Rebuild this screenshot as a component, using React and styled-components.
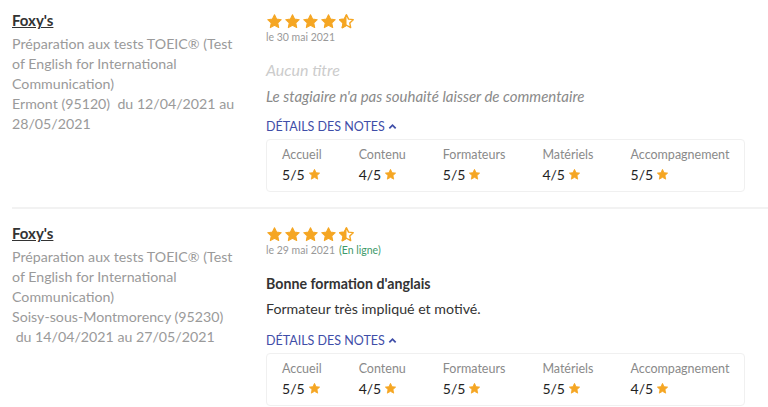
import React from "react";
import styled, { createGlobalStyle } from "styled-components";

const GlobalStyle = createGlobalStyle`
  body {
    margin: 0;
    background: #fff;
    font-family: Lato, "Open Sans", sans-serif;
  }
`;

const reviews = [
  {
    id: 1,
    place: "Ermont (95120) \u00a0du 12/04/2021 au 28/05/2021",
    date: "le 30 mai 2021",
    online: false,
    title: null,
    comment: null,
    notes: [5, 4, 5, 4, 5],
  },
  {
    id: 2,
    place: "Soisy-sous-Montmorency (95230) \u00a0du 14/04/2021 au 27/05/2021",
    date: "le 29 mai 2021",
    online: true,
    title: "Bonne formation d'anglais",
    comment: "Formateur très impliqué et motivé.",
    notes: [5, 4, 5, 5, 4],
  },
];

const labels = ["Accueil", "Contenu", "Formateurs", "Matériels", "Accompagnement"];

const StyleList = styled.ul`
  all: unset;
  display: flex;
  flex-flow: column nowrap;
  padding: 10px 0 0 12px;
  list-style-type: none;
`;

const StyleReview = styled.li`
  display: flex;
  flex-flow: row nowrap;
  gap: 28px;
  padding-bottom: 15px;
  border-bottom: ${(p) => (p.$last ? "none" : "2px solid #f2f2f2")};
  margin-bottom: ${(p) => (p.$last ? "0" : "14px")};
`;

const StyleTraining = styled.div`
  width: 226px;
  flex-shrink: 0;
  font-size: 14.2px;
  line-height: 20px;
  color: #9a9a9a;

  .org {
    display: block;
    font-size: 15px;
    font-weight: 700;
    color: #333;
    text-decoration: underline;
    margin-bottom: 4px;
  }
`;

const StyleBody = styled.div`
  flex: 1;
  min-width: 0;
  padding: 3px 23px 0 0;
  display: flex;
  flex-flow: column nowrap;
`;

const StyleStars = styled.div`
  display: flex;
  gap: 1px;
  height: 16px;
  align-items: center;
`;

const StyleDate = styled.div`
  font-size: 10.5px;
  color: #999;
  margin-top: 2px;

  .online {
    color: #3e9a6a;
    margin-left: 4px;
  }
`;

const StyleTitle = styled.div`
  margin-top: ${(p) => (p.$empty ? "17px" : "19px")};
  font-size: ${(p) => (p.$empty ? "16px" : "14.2px")};
  font-weight: ${(p) => (p.$empty ? 400 : 700)};
  font-style: ${(p) => (p.$empty ? "italic" : "normal")};
  color: ${(p) => (p.$empty ? "#cccccc" : "#333")};
`;

const StyleComment = styled.div`
  margin-top: 8px;
  font-size: ${(p) => (p.$empty ? "15px" : "14.2px")};
  font-style: ${(p) => (p.$empty ? "italic" : "normal")};
  color: ${(p) => (p.$empty ? "#8a8a8a" : "#333")};
`;

const StyleToggle = styled.div`
  margin-top: ${(p) => (p.$empty ? "14px" : "16px")};
  display: flex;
  align-items: center;
  gap: 3px;
  font-size: 12.5px;
  color: #3f4ea8;
  text-transform: uppercase;
`;

const StyleNotes = styled.div`
  margin-top: 5px;
  border: 1px solid #f0f0f0;
  border-radius: 4px;
  padding: 7px 15px 8px;
  display: flex;
  gap: 37px;
`;

const StyleNote = styled.div`
  display: flex;
  flex-flow: column nowrap;
  gap: 4px;

  .label {
    font-size: 12.5px;
    color: #8a8a8a;
  }

  .value {
    display: flex;
    align-items: center;
    gap: 3px;
    font-size: 14px;
    color: #222;
  }
`;

function Star({ size = 14, half = false }) {
  const d =
    "M12 2.5l2.9 6.1 6.6.8-4.9 4.6 1.3 6.6L12 17.3l-5.9 3.3 1.3-6.6-4.9-4.6 6.6-.8z";
  return (
    <svg width={size} height={size} viewBox="0 0 24 24">
      {half ? (
        <>
          <defs>
            <clipPath id="half-clip">
              <rect x="0" y="0" width="12" height="24" />
            </clipPath>
          </defs>
          <path d={d} fill="none" stroke="#f5a623" strokeWidth="2" strokeLinejoin="round" />
          <path d={d} fill="#f5a623" stroke="#f5a623" strokeWidth="2" strokeLinejoin="round" clipPath="url(#half-clip)" />
        </>
      ) : (
        <path d={d} fill="#f5a623" stroke="#f5a623" strokeWidth="1.5" strokeLinejoin="round" />
      )}
    </svg>
  );
}

function Chevron() {
  return (
    <svg width="9" height="9" viewBox="0 0 10 10">
      <path d="M1.5 7l3.5-3.5L8.5 7" fill="none" stroke="#3f4ea8" strokeWidth="2" />
    </svg>
  );
}

function Review({ review, last }) {
  const empty = !review.title;
  return (
    <StyleReview $last={last}>
      <StyleTraining>
        <span className="org">Foxy's</span>
        Préparation aux tests TOEIC® (Test of English for International Communication)
        <br />
        {review.place}
      </StyleTraining>
      <StyleBody>
        <StyleStars>
          <Star size={17} />
          <Star size={17} />
          <Star size={17} />
          <Star size={17} />
          <Star size={17} half />
        </StyleStars>
        <StyleDate>
          {review.date}
          {review.online && <span className="online">(En ligne)</span>}
        </StyleDate>
        <StyleTitle $empty={empty}>{review.title || "Aucun titre"}</StyleTitle>
        <StyleComment $empty={!review.comment}>
          {review.comment || "Le stagiaire n'a pas souhaité laisser de commentaire"}
        </StyleComment>
        <StyleToggle $empty={empty}>
          Détails des notes <Chevron />
        </StyleToggle>
        <StyleNotes>
          {labels.map((label, i) => (
            <StyleNote key={label}>
              <span className="label">{label}</span>
              <span className="value">
                {review.notes[i]}/5 <Star size={13} />
              </span>
            </StyleNote>
          ))}
        </StyleNotes>
      </StyleBody>
    </StyleReview>
  );
}

export default function App() {
  return (
    <>
      <GlobalStyle />
      <StyleList>
        {reviews.map((r, i) => (
          <Review key={r.id} review={r} last={i === reviews.length - 1} />
        ))}
      </StyleList>
    </>
  );
}
